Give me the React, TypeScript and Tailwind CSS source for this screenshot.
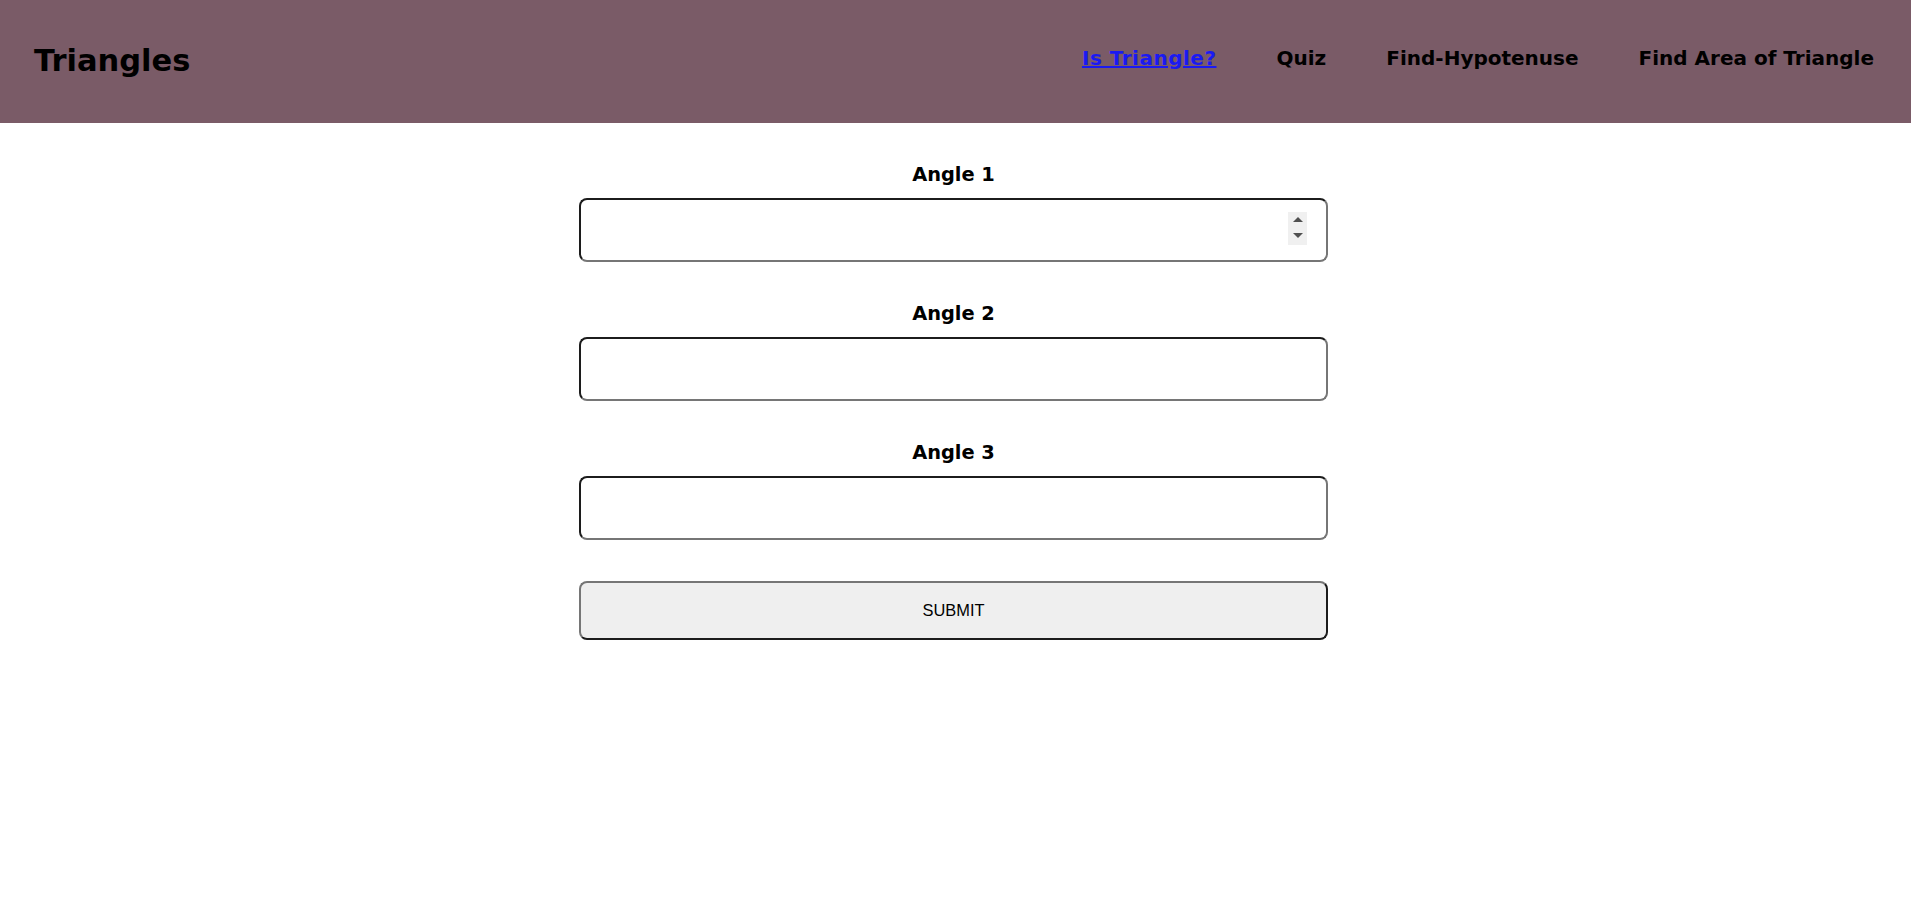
import React from 'react';

const NAV = ['Is Triangle?', 'Quiz', 'Find-Hypotenuse', 'Find Area of Triangle'];

const AngleField: React.FC<{ label: string; spinner?: boolean }> = ({ label, spinner }) => (
  <div className="flex w-full flex-col items-center">
    <label className="mb-[12px] block text-[19.4px] font-bold leading-[22px] text-black">{label}</label>
    <div className="relative w-full">
      <input
        type="text"
        className="block h-[64px] w-full rounded-lg border-2 border-t-[#1c1c1c] border-l-[#1c1c1c] border-r-[#767676] border-b-[#767676] bg-white px-3 outline-none"
      />
      {/* spin buttons (hover state in the reference) */}
      {spinner && (
        <div className="absolute right-[21px] top-[14px] flex h-[33px] w-[19px] flex-col items-center justify-center gap-[11px] bg-[#f0f0f0] pb-[2px]">
          <span className="h-0 w-0 border-x-[5px] border-b-[5px] border-x-transparent border-b-[#505050]" />
          <span className="h-0 w-0 border-x-[5px] border-t-[5px] border-x-transparent border-t-[#505050]" />
        </div>
      )}
    </div>
  </div>
);

export default function App() {
  return (
    <div className="min-h-screen bg-white font-['DejaVu_Sans',Verdana,sans-serif]">
      {/* Top bar */}
      <header className="flex h-[123px] items-center justify-between bg-[#7a5b67] pl-[34px] pr-[37px]">
        <h1 className="text-[30.5px] font-bold leading-none text-black">Triangles</h1>
        <nav className="flex items-center gap-[60px] pb-[8px]">
          {NAV.map((item, i) => (
            <a
              key={item}
              href="#"
              className={
                i === 0
                  ? 'text-[20px] font-bold tracking-[0.5px] text-[#1a1af2] underline'
                  : 'text-[20px] font-bold text-black no-underline'
              }
            >
              {item}
            </a>
          ))}
        </nav>
      </header>

      {/* Angle form */}
      <div className="flex justify-center pr-[4px]">
        <form className="flex w-[749px] flex-col items-center gap-[41px] pt-[41px]">
          <AngleField label="Angle 1" spinner />
          <AngleField label="Angle 2" />
          <AngleField label="Angle 3" />
          <button
            type="button"
            className="h-[59px] w-full rounded-lg border-2 border-t-[#767676] border-l-[#767676] border-r-[#1c1c1c] border-b-[#1c1c1c] bg-[#efefef] font-['Liberation_Sans',Arial,sans-serif] text-[16.4px] text-black"
          >
            SUBMIT
          </button>
        </form>
      </div>
    </div>
  );
}
